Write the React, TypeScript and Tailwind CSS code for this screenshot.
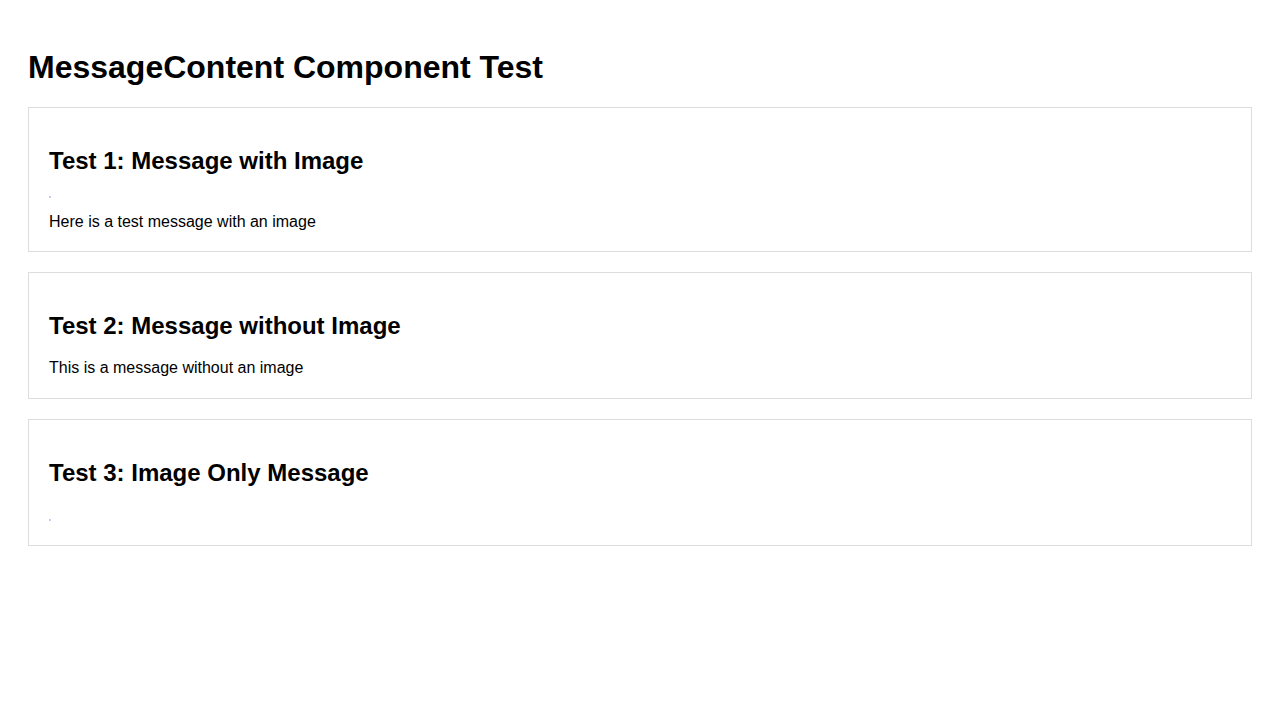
import React from "react";

function Dot() {
  return <div className="w-[2px] h-[2px] bg-[#cbc8f0]" />;
}

export default function App() {
  return (
    <div
      className="min-h-[720px] bg-white text-black px-[28px] pt-[28px] pb-[28px]"
      style={{ fontFamily: '"Liberation Sans", Arial, sans-serif' }}
    >
      <h1 className="text-[32px] font-bold leading-[1.149] mt-[21.44px] mb-[20.44px]">
        MessageContent Component Test
      </h1>

      <div className="border border-[#dddddd] p-[20px] mb-[20px]">
        <h2 className="text-[24px] font-bold leading-[1.149] mt-[18.92px] mb-[19.92px]">
          Test 1: Message with Image
        </h2>
        <div className="pt-[2px]">
          <Dot />
        </div>
        <p className="text-[16px] leading-[1.149] mt-[14.5px]">
          Here is a test message with an image
        </p>
      </div>

      <div className="border border-[#dddddd] p-[20px] mb-[20px]">
        <h2 className="text-[24px] font-bold leading-[1.149] mt-[19.4px] mb-[19.6px]">
          Test 2: Message without Image
        </h2>
        <p className="text-[16px] leading-[1.149]">
          This is a message without an image
        </p>
      </div>

      <div className="border border-[#dddddd] p-[20px] mb-[20px]">
        <h2 className="text-[24px] font-bold leading-[1.149] mt-[19.4px] mb-[19.6px]">
          Test 3: Image Only Message
        </h2>
        <div className="h-[18.4px] pt-[13px]">
          <Dot />
        </div>
      </div>
    </div>
  );
}
